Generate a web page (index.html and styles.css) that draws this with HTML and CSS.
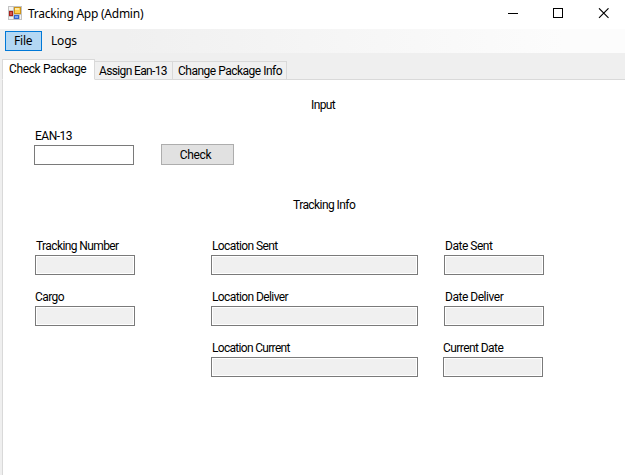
FILE: index.html
```html
<!DOCTYPE html>
<html lang="en">
<head>
<meta charset="utf-8">
<title>Tracking App (Admin)</title>
<link rel="stylesheet" href="styles.css">
</head>
<body>
<header class="titlebar">
  <svg class="app-icon" width="15" height="15" viewBox="0 0 15 15" shape-rendering="crispEdges">
    <rect width="14" height="14" fill="#c3c3c3"/>
    <path d="M1 1h4v3H1zM1 11h4v2H1zM12 9h1v4h-1z" fill="#f2f2f2"/>
    <rect x="1" y="5" width="4" height="5" fill="#a8201a"/><rect x="2" y="6" width="2" height="3" fill="#d8574b"/>
    <rect x="6" y="1" width="7" height="7" fill="#cf9418"/><rect x="7" y="2" width="5" height="5" fill="#ffd052"/><rect x="7" y="2" width="4" height="2" fill="#ffeaa0"/>
    <rect x="6" y="9" width="5" height="4" fill="#3465cb"/><rect x="7" y="10" width="3" height="2" fill="#7aa5f3"/>
  </svg>
  <h1 class="title">Tracking App (Admin)</h1>
  <svg class="controls" width="101" height="11" viewBox="0 0 101 11">
    <path d="M0 5.500h10M45.500.500h9v9h-9z" fill="none" stroke="#000" shape-rendering="crispEdges"/>
    <path d="M91 .3l9.500 9.500M100.500.3L91 9.800" fill="none" stroke="#000" stroke-width="1.100"/>
  </svg>
</header>
<nav class="menu"><span class="menu-item selected">File</span><span class="menu-item logs">Logs</span></nav>
<div class="tabs">
  <div class="tab active">Check Package</div>
  <div class="tab assign">Assign Ean-13</div>
  <div class="tab change">Change Package Info</div>
</div>
<main class="panel">
  <h2 class="heading input-heading">Input</h2>
  <section class="lookup">
    <label class="field ean"><span>EAN-13</span><input type="text"></label>
    <button type="button">Check</button>
  </section>
  <h2 class="heading info-heading">Tracking Info</h2>
  <section class="info">
    <div class="column">
      <label class="field"><span>Tracking Number</span><input readonly></label>
      <label class="field cargo"><span>Cargo</span><input readonly></label>
    </div>
    <div class="column">
      <label class="field"><span>Location Sent</span><input readonly></label>
      <label class="field"><span>Location Deliver</span><input readonly></label>
      <label class="field"><span class="tight">Location Current</span><input readonly></label>
    </div>
    <div class="column dates">
      <label class="field"><span>Date Sent</span><input readonly></label>
      <label class="field"><span>Date Deliver</span><input readonly></label>
      <label class="field current"><span>Current Date</span><input readonly></label>
    </div>
  </section>
</main>
</body>
</html>
```
FILE: styles.css
```css
* { box-sizing: border-box; }
body {
  margin: 0; width: 625px; height: 475px; overflow: hidden;
  display: flex; flex-direction: column;
  background: #efefef; color: #000;
  font: 12px/15px Roboto, "Liberation Sans", sans-serif;
  letter-spacing: -.6px;
}
h1, h2 { margin: 0; font: inherit; }
.titlebar { height: 29px; flex: none; display: flex; background: #fff; padding: 6px 16px 0 8px; }
.app-icon { flex: none; }
.title { margin-left: 5px; font: 12px/16px "Noto Sans", sans-serif; letter-spacing: -.25px; }
.controls { margin: 2px 0 0 auto; }
.menu { height: 24px; flex: none; display: flex; padding: 2px 5px; background: linear-gradient(90deg, #f0f0f0 20%, #fcfcfc 90%); font: 12px/19px "Noto Sans", sans-serif; letter-spacing: -.2px; }
.menu-item { height: 20px; padding-left: 9px; }
.selected { width: 37px; border: 1px solid #0078d7; background: #b3d7f3; padding-left: 8px; line-height: 17px; }
.tabs { height: 27px; flex: none; display: flex; align-items: flex-end; padding-left: 2px; }
.tabs::after { content: ""; flex: 1; height: 1px; background: #d9d9d9; }
.tab { height: 19px; border: 1px solid #d9d9d9; border-left: 0; background: #f0f0f0; padding: 2px 0 0 4px; white-space: nowrap; }
.active { width: 93px; height: 21px; background: #fff; border-left: 1px solid #d9d9d9; border-bottom-color: #fff; padding-left: 6px; letter-spacing: -.37px; }
.assign { width: 78px; letter-spacing: -.64px; }
.change { width: 114px; padding-left: 5px; letter-spacing: -.5px; }
.panel { flex: 1; margin-left: 2px; border-left: 1px solid #d9d9d9; background: #fff; padding-top: 18px; }
.input-heading { margin-left: 308px; }
.info-heading { margin: 33px 0 0 290px; letter-spacing: -.57px; }
.lookup { display: flex; align-items: flex-end; gap: 27px; margin: 16px 0 0 31px; }
.field { display: flex; flex-direction: column; height: 36px; }
.field span { height: 16px; padding-left: 1px; white-space: nowrap; }
.field .tight { letter-spacing: -.69px; }
.field input { width: 100%; height: 20px; border: 1px solid #7a7a7a; background: #f0f0f0; box-shadow: inset 0 0 0 1px #fff; margin: 0; padding: 2px; outline: 0; border-radius: 0; }
.ean { width: 100px; letter-spacing: -.5px; }
.field.ean input { background: #fff; }
.field.cargo span { padding-left: 0; }
button { width: 73px; height: 21px; border: 1px solid #adadad; background: #e1e1e1; color: #000; font: inherit; letter-spacing: -.35px; padding: 1px 4px 0 0; border-radius: 0; }
.info { display: grid; grid-template-columns: 100px 207px 100px; column-gap: 76px; margin: 26px 0 0 32px; }
.column { display: flex; flex-direction: column; gap: 15px; }
.dates { margin-left: -50px; width: 100px; letter-spacing: -.47px; }
.current { margin-left: -1px; width: 100px; letter-spacing: -.57px; }
.field.current span { padding-left: 0; }
```
